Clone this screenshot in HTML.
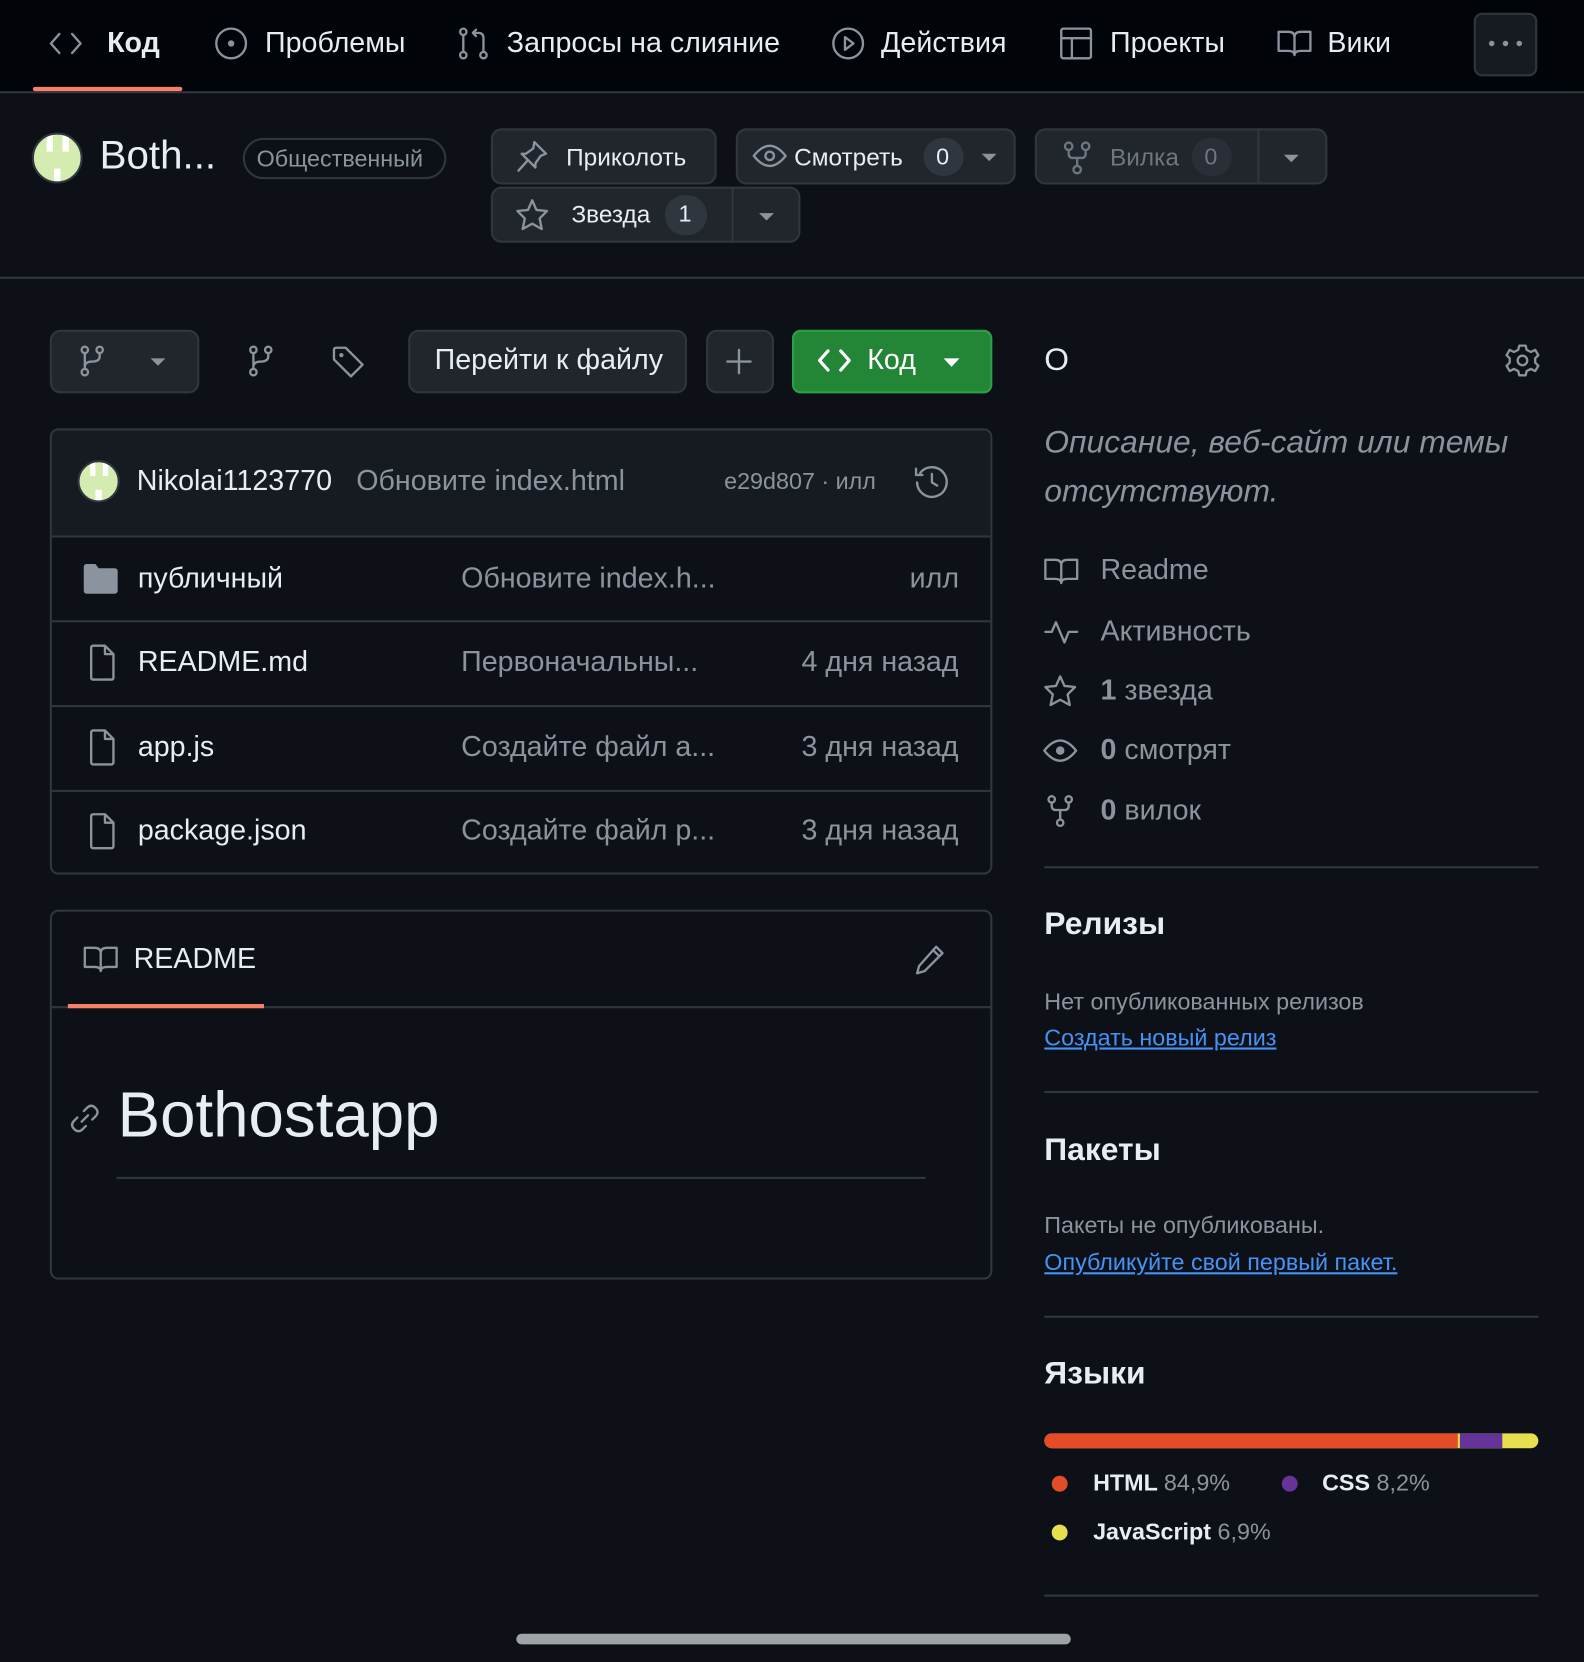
<!DOCTYPE html>
<html><head><meta charset="utf-8"><style>
html,body{margin:0;padding:0;background:#0d1117;width:1584px;height:1662px;overflow:hidden}
#w{position:absolute;left:0;top:0;width:1494px;height:1568px;transform:scale(1.0602);transform-origin:0 0;font-family:"Liberation Sans",sans-serif;color:#e6edf3}
.a{position:absolute}
.t{position:absolute;white-space:nowrap;line-height:1}
.g{color:#8b949e}
.btn{position:absolute;background:#21262d;border:2px solid #30363d;border-radius:10px;box-sizing:border-box}
svg{position:absolute;overflow:visible}
.ic{fill:none;stroke:#8b949e;stroke-width:2.2;stroke-linecap:round;stroke-linejoin:round}
.hl{position:absolute;height:2px;background:#30363d}
</style></head><body><div id="w">
<!-- nav -->
<div class="a" style="left:0;top:0;width:1494px;height:86px;background:#010409"></div>
<div class="hl" style="left:0;top:86px;width:1494px"></div>
<div class="a" style="left:31px;top:82px;width:141px;height:4px;background:#f78166;border-radius:2px"></div>
<svg style="left:46px;top:29px" width="32" height="24"><path class="ic" d="M10 3 L2 12 L10 21 M22 3 L30 12 L22 21"/></svg>
<div class="t" style="left:101px;top:27px;font-size:27px;font-weight:bold">Код</div>
<svg style="left:203px;top:26px" width="30" height="30"><circle class="ic" cx="15" cy="15" r="14"/><circle cx="15" cy="15" r="3" fill="#8b949e"/></svg>
<div class="t" style="left:250px;top:27px;font-size:27px;color:#e6edf3">Проблемы</div>
<svg style="left:432px;top:26px" width="30" height="30"><circle class="ic" cx="5" cy="4" r="3"/><circle class="ic" cx="5" cy="26" r="3"/><path class="ic" d="M5 7 V23"/><circle class="ic" cx="24" cy="26" r="3"/><path class="ic" d="M24 23 V10 Q24 5 19 5 H14 M17 2 L14 5 L17 8"/></svg>
<div class="t" style="left:478px;top:27px;font-size:27px">Запросы на слияние</div>
<svg style="left:785px;top:26px" width="30" height="30"><circle class="ic" cx="15" cy="15" r="14"/><path class="ic" d="M12 9 L20 15 L12 21 Z"/></svg>
<div class="t" style="left:831px;top:27px;font-size:27px">Действия</div>
<svg style="left:1000px;top:26px" width="30" height="30"><rect class="ic" x="1" y="1" width="28" height="28" rx="2"/><path class="ic" d="M1 10 H29 M11 10 V29"/></svg>
<div class="t" style="left:1047px;top:27px;font-size:27px">Проекты</div>
<svg style="left:1205px;top:28px" width="32" height="26"><path class="ic" d="M1 2 H10 Q16 2 16 7 V24 Q16 20 10 20 H1 Z M31 2 H22 Q16 2 16 7 M16 24 Q16 20 22 20 H31 V2"/></svg>
<div class="t" style="left:1252px;top:27px;font-size:27px">Вики</div>
<div class="a" style="left:1390px;top:12px;width:60px;height:60px;border:2px solid #30363d;border-radius:8px;box-sizing:border-box;background:#161b22"></div>
<svg style="left:1404px;top:38px" width="34" height="6"><circle cx="3" cy="3" r="2.6" fill="#8b949e"/><circle cx="16" cy="3" r="2.6" fill="#8b949e"/><circle cx="29" cy="3" r="2.6" fill="#8b949e"/></svg>
<!-- header -->
<div class="a" style="left:30px;top:125px;width:48px;height:48px;border-radius:50%;background:#d4ecb0;border:2px solid #30363d;box-sizing:border-box;overflow:hidden"><div class="a" style="left:12px;top:0;width:6px;height:16px;background:#fff"></div><div class="a" style="left:27px;top:0;width:6px;height:16px;background:#fff"></div><div class="a" style="left:19px;top:32px;width:6px;height:14px;background:#fff"></div></div>
<div class="t" style="left:94px;top:128px;font-size:38px;font-weight:500">Both...</div>
<div class="a" style="left:229px;top:130px;width:192px;height:39px;border:2px solid #30363d;border-radius:20px;box-sizing:border-box"></div>
<div class="t g" style="left:242px;top:139px;font-size:22px">Общественный</div>
<div class="btn" style="left:463px;top:121px;width:213px;height:53px"></div>
<svg style="left:487px;top:132px" width="30" height="32"><path class="ic" d="M17 2 L28 13 L23 15 L18 22 L18 26 L5 13 L9 13 L16 8 Z M11 19 L2 29"/></svg>
<div class="t" style="left:534px;top:137px;font-size:23px">Приколоть</div>
<div class="btn" style="left:694px;top:121px;width:264px;height:53px"></div>
<svg style="left:710px;top:136px" width="32" height="22"><path class="ic" d="M1 11 Q16 -8 31 11 Q16 30 1 11 Z"/><circle class="ic" cx="16" cy="11" r="4"/></svg>
<div class="t" style="left:749px;top:137px;font-size:23px">Смотреть</div>
<div class="a" style="left:871px;top:130px;width:38px;height:36px;border-radius:18px;background:#30363d"></div>
<div class="t" style="left:883px;top:137px;font-size:22px">0</div>
<svg style="left:926px;top:145px" width="16" height="10"><path d="M0 0 H14 L7 7 Z" fill="#8b949e"/></svg>
<div class="btn" style="left:976px;top:121px;width:276px;height:53px"></div>
<div class="a" style="left:1186px;top:121px;width:2px;height:53px;background:#30363d"></div>
<svg style="left:1003px;top:133px" width="26" height="32"><circle class="ic" cx="5" cy="5" r="3.5" style="stroke:#6e7681"/><circle class="ic" cx="21" cy="5" r="3.5" style="stroke:#6e7681"/><circle class="ic" cx="13" cy="27" r="3.5" style="stroke:#6e7681"/><path class="ic" style="stroke:#6e7681" d="M5 9 V12 Q5 16 9 16 H17 Q21 16 21 12 V9 M13 16 V23"/></svg>
<div class="t" style="left:1047px;top:137px;font-size:23px;color:#6e7681">Вилка</div>
<div class="a" style="left:1124px;top:130px;width:38px;height:36px;border-radius:18px;background:#30363d;opacity:.6"></div>
<div class="t" style="left:1136px;top:137px;font-size:22px;color:#6e7681">0</div>
<svg style="left:1211px;top:146px" width="16" height="10"><path d="M0 0 H14 L7 7 Z" fill="#8b949e"/></svg>
<div class="btn" style="left:463px;top:176px;width:292px;height:53px"></div>
<div class="a" style="left:690px;top:176px;width:2px;height:53px;background:#30363d"></div>
<svg style="left:487px;top:188px" width="30" height="30"><path class="ic" d="M15 1 L19 10 L29 11 L22 18 L24 28 L15 23 L6 28 L8 18 L1 11 L11 10 Z"/></svg>
<div class="t" style="left:539px;top:191px;font-size:23px">Звезда</div>
<div class="a" style="left:627px;top:184px;width:40px;height:38px;border-radius:19px;background:#30363d"></div>
<div class="t" style="left:640px;top:191px;font-size:22px">1</div>
<svg style="left:716px;top:201px" width="16" height="10"><path d="M0 0 H14 L7 7 Z" fill="#8b949e"/></svg>
<div class="hl" style="left:0;top:261px;width:1494px"></div>
<!-- toolbar -->
<div class="btn" style="left:47px;top:311px;width:141px;height:60px"></div>
<svg style="left:76px;top:326px" width="24" height="30"><circle class="ic" cx="4" cy="4" r="3"/><circle class="ic" cx="18" cy="4" r="3"/><circle class="ic" cx="4" cy="25" r="3"/><path class="ic" d="M4 7 V22 M18 7 V10 Q18 15 11 15 Q4 15 4 20"/></svg>
<svg style="left:142px;top:338px" width="16" height="10"><path d="M0 0 H14 L7 7 Z" fill="#8b949e"/></svg>
<svg style="left:235px;top:326px" width="24" height="30"><circle class="ic" cx="4" cy="4" r="3"/><circle class="ic" cx="18" cy="4" r="3"/><circle class="ic" cx="4" cy="25" r="3"/><path class="ic" d="M4 7 V22 M18 7 V10 Q18 15 11 15 Q4 15 4 20"/></svg>
<svg style="left:313px;top:326px" width="32" height="32"><path class="ic" d="M2 4 V13 L18 29 L29 18 L13 2 H4 Q2 2 2 4 Z"/><circle cx="9" cy="9" r="2" fill="#8b949e"/></svg>
<div class="btn" style="left:385px;top:311px;width:263px;height:60px"></div>
<div class="t" style="left:410px;top:326px;font-size:27px">Перейти к файлу</div>
<div class="btn" style="left:666px;top:311px;width:64px;height:60px"></div>
<svg style="left:685px;top:329px" width="24" height="24"><path class="ic" d="M12 1 V23 M1 12 H23"/></svg>
<div class="a" style="left:747px;top:311px;width:189px;height:60px;background:#238636;border-radius:8px;border:2px solid #2ea043;box-sizing:border-box"></div>
<svg style="left:771px;top:329px" width="32" height="22"><path class="ic" style="stroke:#fff;stroke-width:3" d="M10 2 L2 11 L10 20 M22 2 L30 11 L22 20"/></svg>
<div class="t" style="left:818px;top:326px;font-size:27px;color:#fff">Код</div>
<svg style="left:890px;top:338px" width="16" height="10"><path d="M0 0 H15 L7.5 8 Z" fill="#fff"/></svg>
<!-- file box -->
<div class="a" style="left:47px;top:404px;width:889px;height:421px;border:2px solid #30363d;border-radius:8px;box-sizing:border-box;overflow:hidden"><div class="a" style="left:0;top:0;width:889px;height:101px;background:#161b22"></div></div>
<div class="a" style="left:73px;top:434px;width:40px;height:40px;border-radius:50%;background:#d4ecb0;border:2px solid #30363d;box-sizing:border-box;overflow:hidden"><div class="a" style="left:10px;top:0;width:5px;height:13px;background:#fff"></div><div class="a" style="left:22px;top:0;width:5px;height:13px;background:#fff"></div><div class="a" style="left:15px;top:26px;width:6px;height:12px;background:#fff"></div></div>
<div class="t" style="left:129px;top:440px;font-size:27px;font-weight:500">Nikolai1123770</div>
<div class="t g" style="left:336px;top:440px;font-size:27px">Обновите index.html</div>
<div class="t g" style="left:683px;top:443px;font-size:22px">e29d807 · илл</div>
<svg style="left:862px;top:438px" width="34" height="34"><path class="ic" d="M6 8 A14 14 0 1 1 3 17 M2 4 V10 H8 M17 9 V17 L22 20"/></svg>
<div class="hl" style="left:47px;top:505px;width:889px"></div>
<div class="hl" style="left:47px;top:585px;width:889px"></div>
<div class="hl" style="left:47px;top:665px;width:889px"></div>
<div class="hl" style="left:47px;top:745px;width:889px"></div>
<svg style="left:79px;top:532px" width="32" height="28"><path d="M0 3 Q0 0 3 0 H11 L14 4 H29 Q32 4 32 7 V25 Q32 28 29 28 H3 Q0 28 0 25 Z" fill="#8b949e"/></svg>
<div class="t" style="left:130px;top:532px;font-size:27px">публичный</div>
<div class="t g" style="left:435px;top:532px;font-size:27px">Обновите index.h...</div>
<div class="t g" style="left:858px;top:532px;font-size:27px">илл</div>
<svg style="left:84px;top:608px" width="24" height="34"><path class="ic" d="M2 3 Q2 1 4 1 H15 L23 9 V31 Q23 33 21 33 H4 Q2 33 2 31 Z M15 1 V9 H23"/></svg>
<div class="t" style="left:130px;top:611px;font-size:27px">README.md</div>
<div class="t g" style="left:435px;top:611px;font-size:27px">Первоначальны...</div>
<div class="t g" style="left:756px;top:611px;font-size:27px">4 дня назад</div>
<svg style="left:84px;top:688px" width="24" height="34"><path class="ic" d="M2 3 Q2 1 4 1 H15 L23 9 V31 Q23 33 21 33 H4 Q2 33 2 31 Z M15 1 V9 H23"/></svg>
<div class="t" style="left:130px;top:691px;font-size:27px">app.js</div>
<div class="t g" style="left:435px;top:691px;font-size:27px">Создайте файл а...</div>
<div class="t g" style="left:756px;top:691px;font-size:27px">3 дня назад</div>
<svg style="left:84px;top:767px" width="24" height="34"><path class="ic" d="M2 3 Q2 1 4 1 H15 L23 9 V31 Q23 33 21 33 H4 Q2 33 2 31 Z M15 1 V9 H23"/></svg>
<div class="t" style="left:130px;top:770px;font-size:27px">package.json</div>
<div class="t g" style="left:435px;top:770px;font-size:27px">Создайте файл р...</div>
<div class="t g" style="left:756px;top:770px;font-size:27px">3 дня назад</div>
<!-- readme -->
<div class="a" style="left:47px;top:858px;width:889px;height:349px;border:2px solid #30363d;border-radius:8px;box-sizing:border-box"></div>
<div class="hl" style="left:47px;top:949px;width:889px"></div>
<div class="a" style="left:64px;top:947px;width:185px;height:4px;background:#f78166"></div>
<svg style="left:79px;top:892px" width="32" height="26"><path class="ic" d="M1 2 H10 Q16 2 16 7 V24 Q16 20 10 20 H1 Z M31 2 H22 Q16 2 16 7 M16 24 Q16 20 22 20 H31 V2"/></svg>
<div class="t" style="left:126px;top:891px;font-size:27px;font-weight:500">README</div>
<svg style="left:863px;top:890px" width="30" height="30"><path class="ic" d="M20 3 L26 9 L9 26 L2 28 L4 21 Z M17 6 L23 12"/></svg>
<svg style="left:65px;top:1040px" width="30" height="30"><path class="ic" d="M12 18 L18 12 M14 8 L17 5 Q21 1 25 5 Q29 9 25 13 L22 16 M16 22 L13 25 Q9 29 5 25 Q1 21 5 17 L8 14"/></svg>
<div class="t" style="left:111px;top:1022px;font-size:60px;font-weight:500">Bothostapp</div>
<div class="hl" style="left:110px;top:1110px;width:763px"></div>
<!-- sidebar -->
<div class="t" style="left:985px;top:325px;font-size:30px;font-weight:500">О</div>
<svg style="left:1420px;top:324px" width="32" height="32"><path class="ic" d="M13 2 H19 L20 6 L24 8 L28 6 L31 11 L28 14 V18 L31 21 L28 26 L24 24 L20 26 L19 30 H13 L12 26 L8 24 L4 26 L1 21 L4 18 V14 L1 11 L4 6 L8 8 L12 6 Z"/><circle class="ic" cx="16" cy="16" r="4.5"/></svg>
<div class="t g" style="left:985px;top:403px;font-size:30px;font-style:italic">Описание, веб-сайт или темы</div>
<div class="t g" style="left:985px;top:449px;font-size:30px;font-style:italic">отсутствуют.</div>
<svg style="left:985px;top:526px" width="32" height="26"><path class="ic" d="M1 2 H10 Q16 2 16 7 V24 Q16 20 10 20 H1 Z M31 2 H22 Q16 2 16 7 M16 24 Q16 20 22 20 H31 V2"/></svg>
<div class="t g" style="left:1038px;top:524px;font-size:27px">Readme</div>
<svg style="left:985px;top:584px" width="32" height="24"><path class="ic" d="M1 12 H7 L11 3 L19 22 L23 12 H31"/></svg>
<div class="t g" style="left:1038px;top:582px;font-size:27px">Активность</div>
<svg style="left:985px;top:637px" width="30" height="30"><path class="ic" d="M15 1 L19 10 L29 11 L22 18 L24 28 L15 23 L6 28 L8 18 L1 11 L11 10 Z"/></svg>
<div class="t g" style="left:1038px;top:638px;font-size:27px"><b>1</b> звезда</div>
<svg style="left:984px;top:697px" width="32" height="22"><path class="ic" d="M1 11 Q16 -8 31 11 Q16 30 1 11 Z"/><circle cx="16" cy="11" r="4" fill="#8b949e"/></svg>
<div class="t g" style="left:1038px;top:694px;font-size:27px"><b>0</b> смотрят</div>
<svg style="left:988px;top:750px" width="26" height="30"><circle class="ic" cx="4" cy="4" r="3"/><circle class="ic" cx="20" cy="4" r="3"/><circle class="ic" cx="12" cy="26" r="3"/><path class="ic" d="M4 7 V10 Q4 14 8 14 H16 Q20 14 20 10 V7 M12 14 V23"/></svg>
<div class="t g" style="left:1038px;top:751px;font-size:27px"><b>0</b> вилок</div>
<div class="hl" style="left:985px;top:817px;width:466px"></div>
<div class="t" style="left:985px;top:857px;font-size:30px;font-weight:bold">Релизы</div>
<div class="t g" style="left:985px;top:934px;font-size:22px">Нет опубликованных релизов</div>
<div class="t" style="left:985px;top:968px;font-size:22px;color:#4493f8;text-decoration:underline">Создать новый релиз</div>
<div class="hl" style="left:985px;top:1029px;width:466px"></div>
<div class="t" style="left:985px;top:1070px;font-size:30px;font-weight:bold">Пакеты</div>
<div class="t g" style="left:985px;top:1145px;font-size:22px">Пакеты не опубликованы.</div>
<div class="t" style="left:985px;top:1180px;font-size:22px;color:#4493f8;text-decoration:underline">Опубликуйте свой первый пакет.</div>
<div class="hl" style="left:985px;top:1241px;width:466px"></div>
<div class="t" style="left:985px;top:1281px;font-size:30px;font-weight:bold">Языки</div>
<div class="a" style="left:985px;top:1352px;width:466px;height:14px;border-radius:7px;overflow:hidden;background:#e8df50"><div class="a" style="left:0;top:0;width:390px;height:14px;background:#e34c26"></div><div class="a" style="left:392px;top:0;width:40px;height:14px;background:#663399"></div></div>
<div class="a" style="left:992px;top:1392px;width:15px;height:15px;border-radius:50%;background:#e34c26"></div>
<div class="t" style="left:1031px;top:1388px;font-size:22px;font-weight:bold">HTML <span class="g" style="font-weight:normal">84,9%</span></div>
<div class="a" style="left:1209px;top:1392px;width:15px;height:15px;border-radius:50%;background:#663399"></div>
<div class="t" style="left:1247px;top:1388px;font-size:22px;font-weight:bold">CSS <span class="g" style="font-weight:normal">8,2%</span></div>
<div class="a" style="left:992px;top:1438px;width:15px;height:15px;border-radius:50%;background:#e8df50"></div>
<div class="t" style="left:1031px;top:1434px;font-size:22px;font-weight:bold">JavaScript <span class="g" style="font-weight:normal">6,9%</span></div>
<div class="hl" style="left:985px;top:1504px;width:466px"></div>
<div class="a" style="left:487px;top:1541px;width:523px;height:10px;border-radius:5px;background:#9ea3a8"></div>
</div></body></html>
